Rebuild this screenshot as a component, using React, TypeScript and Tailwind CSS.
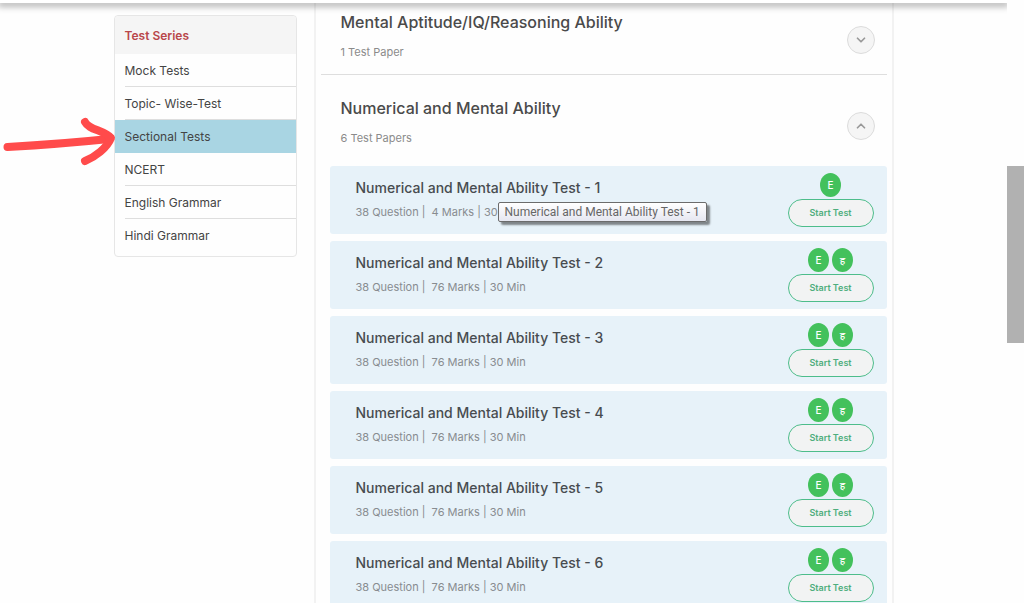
import { ChevronDown, ChevronUp } from "lucide-react";

const series = [
  "Mock Tests",
  "Topic- Wise-Test",
  "Sectional Tests",
  "NCERT",
  "English Grammar",
  "Hindi Grammar",
];

type Paper = { id: number; marks: number; languages: string[]; tooltip?: boolean };

const papers: Paper[] = [
  { id: 1, marks: 4, languages: ["E"], tooltip: true },
  { id: 2, marks: 76, languages: ["E", "ह"] },
  { id: 3, marks: 76, languages: ["E", "ह"] },
  { id: 4, marks: 76, languages: ["E", "ह"] },
  { id: 5, marks: 76, languages: ["E", "ह"] },
  { id: 6, marks: 76, languages: ["E", "ह"] },
];

function Arrow() {
  return (
    <svg
      className="pointer-events-none absolute top-1/2 right-full -mt-[22px] h-[52px] w-[114px] overflow-visible"
      viewBox="0 0 114 52"
      fill="none"
      stroke="#ff4b4b"
      strokeWidth="8"
      strokeLinecap="round"
      strokeLinejoin="round"
      aria-hidden="true"
    >
      <path d="M6.500 32Q60 29 108 24" />
      <path d="M84 7C88 15 103 15 110 23C106 33 94 42 84 46" />
    </svg>
  );
}

function Sidebar() {
  return (
    <nav
      aria-label="Test Series"
      className="mt-3 w-[183px] shrink-0 self-start rounded border border-[#e6e6e6] pb-1 text-xs"
    >
      <h2 className="flex h-[38px] items-center rounded-t bg-[#f5f5f5] px-2.5 pt-0.5 font-semibold text-[#b9474b]">
        Test Series
      </h2>
      <ul>
        {series.map((name, i) => {
          const active = name === "Sectional Tests";
          return (
            <li key={name} className={active ? "relative bg-[#a9d5e3] pl-2.5" : "pl-2.5"}>
              <a
                href="#"
                className={
                  i === series.length - 1 || active
                    ? "flex h-[33px] items-center text-[#444]"
                    : "flex h-[33px] items-center border-b border-[#dedede] pt-0.5 text-[#444]"
                }
              >
                {name}
              </a>
              {active && <Arrow />}
            </li>
          );
        })}
      </ul>
    </nav>
  );
}

function SectionHeader({ title, count, open }: { title: string; count: string; open?: boolean }) {
  const Icon = open ? ChevronUp : ChevronDown;
  return (
    <div className="flex items-center justify-between pr-3 pl-5">
      <div>
        <h2 className="text-base leading-6 font-medium text-[#4a4a4a]">{title}</h2>
        <p className="mt-2 text-[11px] leading-5 text-[#8b8b8b]">{count}</p>
      </div>
      <button
        type="button"
        aria-label={title}
        aria-expanded={!!open}
        className="mt-2 flex size-7 items-center justify-center rounded-full border border-[#dcdcdc] bg-[#f5f5f5] text-[#999]"
      >
        <Icon className="size-3.5" strokeWidth={3} />
      </button>
    </div>
  );
}

function PaperCard({ paper }: { paper: Paper }) {
  const title = `Numerical and Mental Ability Test - ${paper.id}`;
  return (
    <li className="relative flex h-[68px] items-start justify-between rounded-[3px] bg-[#e7f2f9] pr-[13px] pl-[26px]">
      <div className="pt-2.5">
        <h3 className="text-sm leading-6 font-medium text-[#484c50]">{title}</h3>
        <p className="mt-1 text-[11px] leading-4 whitespace-pre text-[#888c90]">
          {`38 Question |  ${paper.marks} Marks | 30 Min`}
        </p>
      </div>
      <div className="flex flex-col items-center gap-[2px] pt-[7px]">
        <div className="flex gap-[3px]">
          {paper.languages.map((l) => (
            <span
              key={l}
              className="flex h-6 w-[21px] items-center justify-center rounded-[50%] bg-[#43c15c] text-[10px] font-medium text-white"
            >
              {l}
            </span>
          ))}
        </div>
        <button
          type="button"
          className="h-7 w-[86px] rounded-full border border-[#4dbd8b] bg-[#f2f3f3] text-[9px] font-semibold text-[#4fae7d]"
        >
          Start Test
        </button>
      </div>
      {paper.tooltip && (
        <div
          role="tooltip"
          className="absolute top-[36px] left-[168px] flex h-5 items-center rounded-[2px] border border-[#6c6c6c] bg-linear-to-b from-white to-[#e6e7f1] px-1.5 font-['Roboto','Noto_Sans',sans-serif] text-xs whitespace-nowrap text-[#666] shadow-[3px_3px_2px_rgba(0,0,0,0.45)]"
        >
          {title}
        </div>
      )}
    </li>
  );
}

export default function App() {
  return (
    <div className="flex h-screen overflow-hidden bg-[#fefefe] font-['Inter','Noto_Sans',sans-serif]">
      <div className="flex min-w-0 flex-1 flex-col overflow-hidden">
        <header className="relative z-10 h-[3px] shrink-0 bg-white shadow-[0_2px_6px_2px_rgba(0,0,0,0.28)]" />
        <main className="mx-auto flex min-h-0 w-full max-w-[780px] flex-1 gap-[17px]">
          <Sidebar />
          <div className="min-w-0 flex-1 border-x-2 border-[#f2f2f2] pr-[5px] pl-[5px]">
            <section className="border-b border-[#dedede] pt-[7px] pb-3">
              <SectionHeader title="Mental Aptitude/IQ/Reasoning Ability" count="1 Test Paper" />
            </section>
            <section className="pt-[21px]">
              <SectionHeader title="Numerical and Mental Ability" count="6 Test Papers" open />
              <ul className="mt-[18px] ml-[9px] flex flex-col gap-[7px]">
                {papers.map((p) => (
                  <PaperCard key={p.id} paper={p} />
                ))}
              </ul>
            </section>
          </div>
        </main>
      </div>
      <div className="flex w-[17px] shrink-0 flex-col bg-[#fefefe] pt-[166px]" aria-hidden="true">
        <div className="h-[177px] bg-[#b1b1b1]" />
      </div>
    </div>
  );
}
